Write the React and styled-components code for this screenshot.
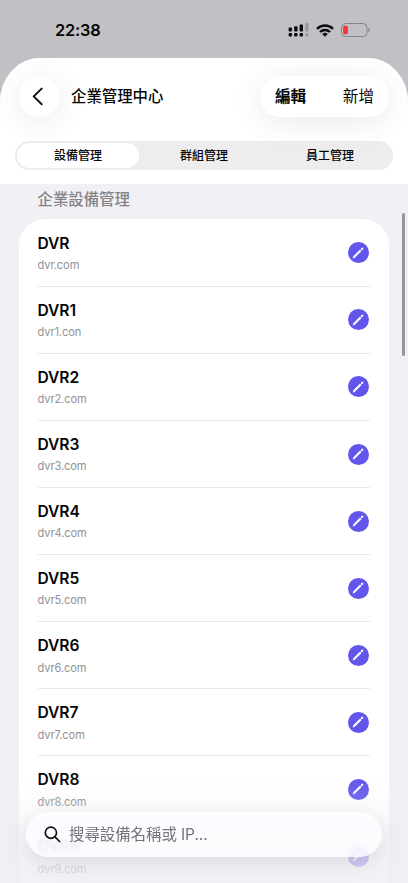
import React, { useState } from 'react'
import styled, { createGlobalStyle } from 'styled-components'

const devices = [
  { name: 'DVR', host: 'dvr.com' },
  { name: 'DVR1', host: 'dvr1.con' },
  { name: 'DVR2', host: 'dvr2.com' },
  { name: 'DVR3', host: 'dvr3.com' },
  { name: 'DVR4', host: 'dvr4.com' },
  { name: 'DVR5', host: 'dvr5.com' },
  { name: 'DVR6', host: 'dvr6.com' },
  { name: 'DVR7', host: 'dvr7.com' },
  { name: 'DVR8', host: 'dvr8.com' },
  { name: 'DVR9', host: 'dvr9.com' },
]

const tabs = ['設備管理', '群組管理', '員工管理']

function StatusBar() {
  return (
    <Status>
      <Time>22:38</Time>
      <StatusIcons>
        <svg width="21" height="14" viewBox="0 0 21 14">
          <g fill="#0b0b0d">
            <rect x="0.6" y="4.6" width="3.4" height="3.8" rx="1" />
            <rect x="6.1" y="3.2" width="3.4" height="5.2" rx="1" />
            <rect x="11.6" y="1.6" width="3.4" height="6.8" rx="1" />
            <rect x="0.6" y="10" width="3.4" height="3.5" rx="1.1" />
            <rect x="6.1" y="10" width="3.4" height="3.5" rx="1.1" />
            <rect x="11.6" y="10" width="3.4" height="3.5" rx="1.1" />
          </g>
          <g fill="#9a999e">
            <rect x="17.2" y="0" width="3.4" height="8.4" rx="1" />
            <rect x="17.2" y="10" width="3.4" height="3.5" rx="1.1" />
          </g>
        </svg>
        <svg width="18" height="13" viewBox="0 0 18 13">
          <g fill="none" stroke="#0b0b0d" strokeWidth="2.4">
            <path d="M1 4.8a11.4 11.4 0 0 1 16 0" />
            <path d="M4 8a7.2 7.2 0 0 1 10 0" />
          </g>
          <path d="M9 12.8 6.2 10a4 4 0 0 1 5.6 0z" fill="#0b0b0d" />
        </svg>
        <svg width="29" height="14" viewBox="0 0 29 14">
          <rect x="0.5" y="0.5" width="25.5" height="13" rx="4" fill="none" stroke="#858489" />
          <rect x="2.1" y="2.8" width="4.8" height="8.4" rx="1.6" fill="#fb3038" />
          <path d="M27.2 4.8v4.4q1.5-.7 1.5-2.2t-1.5-2.2z" fill="#858489" />
        </svg>
      </StatusIcons>
    </Status>
  )
}

function App() {
  const [activeTab, setActiveTab] = useState(0)
  const [query, setQuery] = useState('')

  return (
    <Screen>
      <GlobalStyle />
      <StatusBar />
      <Sheet>
        <Header>
          <NavBar>
            <BackButton aria-label="返回">
              <svg width="12" height="19" viewBox="0 0 12 19">
                <path
                  d="M9.7 1.6 1.7 9.4l8 7.8"
                  fill="none"
                  stroke="#111"
                  strokeWidth="2"
                  strokeLinecap="round"
                  strokeLinejoin="round"
                />
              </svg>
            </BackButton>
            <Title>企業管理中心</Title>
            <Actions>
              <ActionButton $bold>編輯</ActionButton>
              <ActionButton>新增</ActionButton>
            </Actions>
          </NavBar>
          <Segmented>
            {tabs.map((tab, index) => (
              <Segment key={tab} $active={index === activeTab} onClick={() => setActiveTab(index)}>
                {tab}
              </Segment>
            ))}
          </Segmented>
        </Header>
        <Content>
          <SectionLabel>企業設備管理</SectionLabel>
          <Card>
            {devices.map((device) => (
              <Row key={device.name}>
                <div>
                  <DeviceName>{device.name}</DeviceName>
                  <DeviceHost>{device.host}</DeviceHost>
                </div>
                <EditButton aria-label="編輯">
                  <svg width="12" height="12" viewBox="0 0 12 12">
                    <path d="M2.1 9.9 8.8 3.2" stroke="#fff" strokeWidth="2.1" />
                    <path d="M9.9 2.1l.4-.4" stroke="#fff" strokeWidth="2.1" strokeLinecap="round" />
                    <path d="M.7 11.4 1.3 9l1.8 1.8z" fill="#fff" />
                  </svg>
                </EditButton>
              </Row>
            ))}
          </Card>
        </Content>
      </Sheet>
      <ScrollThumb />
      <BottomFade />
      <SearchBar>
        <svg width="17" height="17" viewBox="0 0 17 17">
          <g fill="none" stroke="#111" strokeWidth="1.7" strokeLinecap="round">
            <circle cx="6.9" cy="6.7" r="5.6" />
            <path d="m11 10.9 4.6 4.6" />
          </g>
        </svg>
        <SearchInput
          value={query}
          placeholder="搜尋設備名稱或 IP..."
          onChange={(e) => setQuery(e.target.value)}
        />
      </SearchBar>
    </Screen>
  )
}

export default App

const GlobalStyle = createGlobalStyle`
  * {
    box-sizing: border-box;
  }

  body {
    margin: 0;
    overflow: hidden;
    font-family: Inter, 'Noto Sans CJK TC', sans-serif;
    color: #050505;
  }

  button {
    border: 0;
    padding: 0;
    background: none;
    font-family: inherit;
    color: inherit;
    cursor: pointer;
  }

  svg {
    display: block;
    flex-shrink: 0;
  }
`

const Screen = styled.div`
  position: relative;
  display: flex;
  flex-direction: column;
  width: 408px;
  height: 883px;
  overflow: hidden;
  background: #c1c0c5;
`

const Status = styled.div`
  display: flex;
  align-items: center;
  justify-content: space-between;
  flex-shrink: 0;
  height: 57.5px;
  padding: 3px 38px 0 55px;
`

const Time = styled.div`
  font-size: 16.4px;
  font-weight: 600;
  letter-spacing: -0.2px;
`

const StatusIcons = styled.div`
  display: flex;
  align-items: center;
  gap: 7px;
`

const Sheet = styled.main`
  display: flex;
  flex-direction: column;
  flex: 1;
  min-height: 0;
  overflow: hidden;
  border-radius: 40px 40px 0 0 / 44px 44px 0 0;
  background: #f1f0f5;
`

const Header = styled.header`
  flex-shrink: 0;
  height: 126.5px;
  padding: 18px 15px 0;
  background: #fff;
`

const NavBar = styled.div`
  display: flex;
  align-items: center;
  height: 42px;
  padding: 0 4px;
`

const BackButton = styled.button`
  display: flex;
  align-items: center;
  justify-content: center;
  width: 41px;
  height: 41px;
  padding-right: 3px;
  border-radius: 50%;
  background: #fff;
  box-shadow: 0 4px 32px rgba(0, 0, 0, 0.09);
`

const Title = styled.h1`
  flex: 1;
  margin: 0 0 0 11px;
  font-size: 15.4px;
  line-height: 24px;
  font-weight: 500;
`

const Actions = styled.div`
  display: flex;
  align-items: center;
  justify-content: space-between;
  width: 129px;
  height: 41px;
  padding: 1px 15px 0;
  border-radius: 21px;
  background: #fff;
  box-shadow: 0 4px 32px rgba(0, 0, 0, 0.09);
`

const ActionButton = styled.button`
  font-size: 15.6px;
  line-height: 24px;
  font-weight: ${(props) => (props.$bold ? 600 : 400)};
`

const Segmented = styled.div`
  display: flex;
  gap: 4px;
  height: 29.5px;
  margin-top: 23px;
  padding: 2px;
  border-radius: 15px;
  background: #ededee;
`

const Segment = styled.button`
  flex: 1;
  padding-top: 2px;
  border-radius: 13px;
  font-size: 12px;
  line-height: 18px;
  font-weight: 500;
  background: ${(props) => (props.$active ? '#fff' : 'transparent')};
`

const Content = styled.section`
  padding: 4px 19px 0;
`

const SectionLabel = styled.h2`
  margin: 0 0 7px;
  padding-left: 18.5px;
  font-size: 15.4px;
  line-height: 24px;
  font-weight: 500;
  color: #838287;
`

const Card = styled.div`
  padding: 0.5px 19px 30px 18.5px;
  border-radius: 26px;
  background: #fff;
`

const Row = styled.div`
  display: flex;
  align-items: center;
  justify-content: space-between;
  height: 67.08px;
  padding-top: 0.5px;
  border-bottom: 1px solid #e8e8ea;

  &:last-child {
    border-bottom-color: transparent;
  }
`

const DeviceName = styled.div`
  font-size: 15.6px;
  line-height: 22px;
  font-weight: 600;
  letter-spacing: -0.1px;
`

const DeviceHost = styled.div`
  margin-top: 2.5px;
  font-size: 11.1px;
  line-height: 16px;
  letter-spacing: -0.1px;
  color: #929197;
`

const EditButton = styled.button`
  display: flex;
  align-items: center;
  justify-content: center;
  width: 21px;
  height: 21px;
  margin-right: 1.5px;
  border-radius: 50%;
  background: #6255ec;
`

const ScrollThumb = styled.div`
  position: absolute;
  top: 213px;
  right: 3px;
  width: 3px;
  height: 143px;
  border-radius: 2px;
  background: #96959a;
`

const BottomFade = styled.div`
  position: absolute;
  left: 0;
  right: 0;
  bottom: 0;
  height: 105px;
  background: linear-gradient(
    rgba(239, 238, 243, 0),
    rgba(239, 238, 243, 0.2) 32%,
    rgba(239, 238, 243, 0.72) 70%,
    rgba(239, 238, 243, 0.8)
  );
`

const SearchBar = styled.label`
  position: absolute;
  left: 26px;
  right: 26px;
  bottom: 26px;
  display: flex;
  align-items: center;
  gap: 8px;
  height: 45px;
  padding: 0 18px;
  border-radius: 23px;
  background: rgba(253, 252, 255, 0.84);
  box-shadow: 0 5px 24px rgba(0, 0, 0, 0.1);
  backdrop-filter: blur(1.5px);
`

const SearchInput = styled.input`
  flex: 1;
  min-width: 0;
  border: 0;
  outline: 0;
  padding: 1px 0 0;
  background: none;
  font-family: inherit;
  font-size: 15.5px;
  line-height: 24px;
  letter-spacing: -0.1px;
  color: #111;

  &::placeholder {
    color: #747378;
    opacity: 1;
  }
`
